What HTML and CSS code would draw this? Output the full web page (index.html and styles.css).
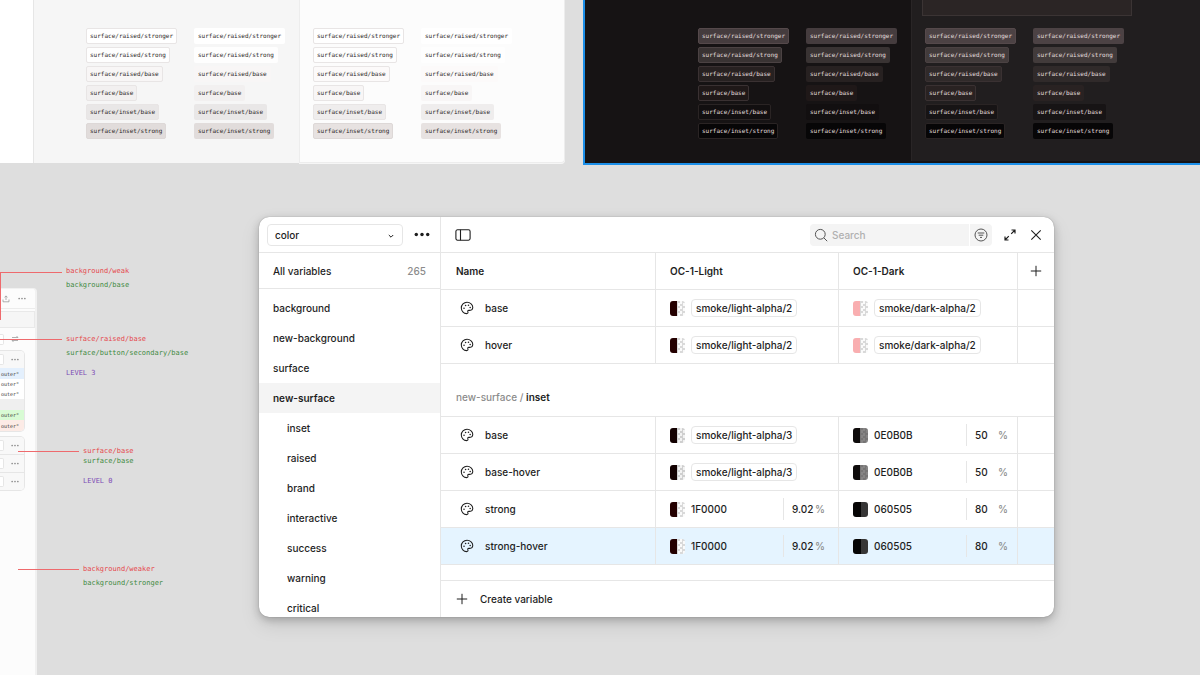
FILE: index.html
```html
<!DOCTYPE html>
<html lang="en">
<head>
<meta charset="utf-8">
<title>Variables</title>
<link rel="stylesheet" href="styles.css">
</head>
<body>
<svg class="defs" aria-hidden="true">
  <symbol id="palette" viewBox="0 0 16 16"><path d="M7.6 14.4C4 14.4 1.5 11.4 1.5 8A6.5 6.5 0 0 1 8 1.5c3.700 0 6.600 2.600 6.600 5.700 0 2.300-1.600 3.500-3.500 3.500h-1c-1.200 0-1.500.8-1.100 1.700.4 1 0 2-1.400 2z" fill="none" stroke="currentColor" stroke-width="1.200"/><circle cx="4.600" cy="8.300" r=".9"/><circle cx="6.400" cy="5.200" r=".9"/><circle cx="9.700" cy="4.800" r=".9"/><circle cx="11.600" cy="7.400" r=".9"/></symbol>
  <symbol id="dots" viewBox="0 0 14 4"><circle cx="2" cy="2" r="1.500"/><circle cx="7" cy="2" r="1.500"/><circle cx="12" cy="2" r="1.500"/></symbol>
  <symbol id="plus" viewBox="0 0 12 12"><path d="M6 .8v10.400M.8 6h10.400" stroke="currentColor" fill="none"/></symbol>
</svg>
<div class="canvas">

  <section class="board board-light">
    <div class="pane pane-a">
      <div class="chips outlined">
        <span class="chip stronger">surface/raised/stronger</span><span class="chip strong">surface/raised/strong</span><span class="chip raised">surface/raised/base</span><span class="chip base">surface/base</span><span class="chip inset">surface/inset/base</span><span class="chip inset-strong">surface/inset/strong</span>
      </div>
      <div class="chips">
        <span class="chip stronger">surface/raised/stronger</span><span class="chip strong">surface/raised/strong</span><span class="chip raised">surface/raised/base</span><span class="chip base">surface/base</span><span class="chip inset">surface/inset/base</span><span class="chip inset-strong">surface/inset/strong</span>
      </div>
    </div>
    <div class="pane pane-b">
      <div class="chips outlined">
        <span class="chip stronger">surface/raised/stronger</span><span class="chip strong">surface/raised/strong</span><span class="chip raised">surface/raised/base</span><span class="chip base">surface/base</span><span class="chip inset">surface/inset/base</span><span class="chip inset-strong">surface/inset/strong</span>
      </div>
      <div class="chips">
        <span class="chip stronger">surface/raised/stronger</span><span class="chip strong">surface/raised/strong</span><span class="chip raised">surface/raised/base</span><span class="chip base">surface/base</span><span class="chip inset">surface/inset/base</span><span class="chip inset-strong">surface/inset/strong</span>
      </div>
    </div>
  </section>

  <section class="board board-dark">
    <div class="pane pane-a">
      <div class="chips outlined">
        <span class="chip stronger">surface/raised/stronger</span><span class="chip strong">surface/raised/strong</span><span class="chip raised">surface/raised/base</span><span class="chip base">surface/base</span><span class="chip inset">surface/inset/base</span><span class="chip inset-strong">surface/inset/strong</span>
      </div>
      <div class="chips">
        <span class="chip stronger">surface/raised/stronger</span><span class="chip strong">surface/raised/strong</span><span class="chip raised">surface/raised/base</span><span class="chip base">surface/base</span><span class="chip inset">surface/inset/base</span><span class="chip inset-strong">surface/inset/strong</span>
      </div>
    </div>
    <div class="pane pane-b">
      <div class="dark-card"></div>
      <div class="chips outlined">
        <span class="chip stronger">surface/raised/stronger</span><span class="chip strong">surface/raised/strong</span><span class="chip raised">surface/raised/base</span><span class="chip base">surface/base</span><span class="chip inset">surface/inset/base</span><span class="chip inset-strong">surface/inset/strong</span>
      </div>
      <div class="chips">
        <span class="chip stronger">surface/raised/stronger</span><span class="chip strong">surface/raised/strong</span><span class="chip raised">surface/raised/base</span><span class="chip base">surface/base</span><span class="chip inset">surface/inset/base</span><span class="chip inset-strong">surface/inset/strong</span>
      </div>
    </div>
  </section>

  <section class="mock">
    <div class="mock-bar">
      <svg class="i-share" viewBox="0 0 8 8"><path d="M4 5V1M2.500 2.300L4 .9l1.500 1.400M1 4.500v2.300h6V4.500" fill="none" stroke="currentColor" stroke-width=".7"/></svg>
      <svg class="i-more"><use href="#dots"/></svg>
    </div>
    <div class="mock-tab"></div>
    <div class="mock-tools">
      <span class="stub"></span>
      <svg class="i-share" viewBox="0 0 8 8"><path d="M1 2.500h6L5.500 1M7 5.500H1L2.500 7" fill="none" stroke="currentColor" stroke-width=".7"/></svg>
    </div>
    <div class="mock-card">
      <div class="mock-row"><span class="stub"></span><svg class="i-more"><use href="#dots"/></svg></div>
      <div class="code tall blue">outer"</div>
      <div class="code">outer"</div>
      <div class="code">outer"</div>
      <div class="code tall gray"></div>
      <div class="code green">outer"</div>
      <div class="code tall pink">outer"</div>
    </div>
    <div class="mock-card">
      <div class="mock-row"><span class="stub"></span><svg class="i-more"><use href="#dots"/></svg></div>
      <div class="mock-row"><span class="stub"></span><svg class="i-more"><use href="#dots"/></svg></div>
      <div class="mock-row"><span class="stub"></span><svg class="i-more"><use href="#dots"/></svg></div>
    </div>
  </section>

  <div class="note note-1"><span class="wire"></span><div><p class="old">background/weak</p><p class="new">background/base</p></div></div>
  <span class="drop"></span>
  <div class="note note-2"><span class="wire"></span><div><p class="old">surface/raised/base</p><p class="new">surface/button/secondary/base</p><p class="level">LEVEL 3</p></div></div>
  <div class="note note-3"><span class="wire"></span><div><p class="old">surface/base</p><p class="new">surface/base</p><p class="level">LEVEL 0</p></div></div>
  <div class="note note-4"><span class="wire"></span><div><p class="old">background/weaker</p><p class="new">background/stronger</p></div></div>

  <main class="window">
    <aside class="sidebar">
      <div class="side-head">
        <div class="picker">
          <select aria-label="Collection"><option>color</option></select>
          <svg class="i-chev" viewBox="0 0 8 8"><path d="M1.800 3L4 5.200 6.200 3" fill="none" stroke="currentColor"/></svg>
        </div>
        <button class="icon-btn" aria-label="More options"><svg class="i-dots"><use href="#dots"/></svg></button>
      </div>
      <button class="all"><span>All variables</span><span class="count">265</span></button>
      <nav class="groups">
        <a href="#">background</a>
        <a href="#">new-background</a>
        <a href="#">surface</a>
        <a href="#" class="current">new-surface</a>
        <a href="#" class="sub">inset</a>
        <a href="#" class="sub">raised</a>
        <a href="#" class="sub">brand</a>
        <a href="#" class="sub">interactive</a>
        <a href="#" class="sub">success</a>
        <a href="#" class="sub">warning</a>
        <a href="#" class="sub">critical</a>
      </nav>
    </aside>
    <div class="content">
      <div class="toolbar">
        <button class="icon-btn" aria-label="Toggle sidebar"><svg class="i-16" viewBox="0 0 16 16"><rect x=".9" y="2.800" width="14.200" height="10.400" rx="1.600" fill="none" stroke="currentColor" stroke-width="1.100"/><path d="M5.500 2.800v10.400" stroke="currentColor" stroke-width="1.100"/></svg></button>
        <div class="search">
          <svg class="i-14" viewBox="0 0 14 14"><circle cx="6.300" cy="6.300" r="4.900" fill="none" stroke="currentColor"/><path d="M9.900 9.900l3.300 3.300" stroke="currentColor"/></svg>
          <input type="text" placeholder="Search" aria-label="Search">
          <button aria-label="Filter"><svg class="i-14" viewBox="0 0 14 14"><circle cx="7" cy="7" r="6" fill="none" stroke="currentColor"/><path d="M3.700 5h6.600M4.700 7.200h4.600M6 9.400h2" stroke="currentColor"/></svg></button>
        </div>
        <button class="icon-btn" aria-label="Expand"><svg class="i-12" viewBox="0 0 12 12"><path d="M7.500 1H11v3.500M11 1L7.200 4.800M4.500 11H1V7.500M1 11l3.800-3.800" fill="none" stroke="currentColor" stroke-width="1.200"/></svg></button>
        <button class="icon-btn" aria-label="Close"><svg class="i-12" viewBox="0 0 12 12"><path d="M1.300 1.300l9.400 9.400M10.700 1.300l-9.400 9.400" stroke="currentColor" stroke-width="1.100"/></svg></button>
      </div>
      <div class="scroll">
      <table class="vars">
        <colgroup><col><col class="c-light"><col class="c-dark"><col class="c-add"></colgroup>
        <thead>
          <tr><th>Name</th><th>OC-1-Light</th><th>OC-1-Dark</th><th class="add"><button class="icon-btn" aria-label="Add mode"><svg class="i-12"><use href="#plus"/></svg></button></th></tr>
        </thead>
        <tbody>
          <tr><td><div class="cell name"><svg class="i-14"><use href="#palette"/></svg>base</div></td><td><div class="cell"><i class="swatch maroon"></i><span class="alias">smoke/light-alpha/2</span></div></td><td><div class="cell"><i class="swatch rose"></i><span class="alias">smoke/dark-alpha/2</span></div></td><td></td></tr>
          <tr><td><div class="cell name"><svg class="i-14"><use href="#palette"/></svg>hover</div></td><td><div class="cell"><i class="swatch maroon"></i><span class="alias">smoke/light-alpha/2</span></div></td><td><div class="cell"><i class="swatch rose"></i><span class="alias">smoke/dark-alpha/2</span></div></td><td></td></tr>
          <tr class="group"><td colspan="4"><span class="path">new-surface /</span> <b>inset</b></td></tr>
          <tr><td><div class="cell name"><svg class="i-14"><use href="#palette"/></svg>base</div></td><td><div class="cell"><i class="swatch wine"></i><span class="alias">smoke/light-alpha/3</span></div></td><td><div class="cell"><i class="swatch half"></i><span class="hex">0E0B0B</span><span class="alpha dark">50<span class="pct">%</span></span></div></td><td></td></tr>
          <tr><td><div class="cell name"><svg class="i-14"><use href="#palette"/></svg>base-hover</div></td><td><div class="cell"><i class="swatch wine"></i><span class="alias">smoke/light-alpha/3</span></div></td><td><div class="cell"><i class="swatch half"></i><span class="hex">0E0B0B</span><span class="alpha dark">50<span class="pct">%</span></span></div></td><td></td></tr>
          <tr><td><div class="cell name"><svg class="i-14"><use href="#palette"/></svg>strong</div></td><td><div class="cell"><i class="swatch maroon"></i><span class="hex">1F0000</span><span class="alpha">9.02<span class="pct">%</span></span></div></td><td><div class="cell"><i class="swatch most"></i><span class="hex">060505</span><span class="alpha dark">80<span class="pct">%</span></span></div></td><td></td></tr>
          <tr class="picked"><td><div class="cell name"><svg class="i-14"><use href="#palette"/></svg>strong-hover</div></td><td><div class="cell"><i class="swatch maroon"></i><span class="hex">1F0000</span><span class="alpha">9.02<span class="pct">%</span></span></div></td><td><div class="cell"><i class="swatch most"></i><span class="hex">060505</span><span class="alpha dark">80<span class="pct">%</span></span></div></td><td></td></tr>
        </tbody>
      </table>
      </div>
      <button class="create"><svg class="i-12"><use href="#plus"/></svg>Create variable</button>
    </div>
  </main>
</div>
</body>
</html>
```
FILE: styles.css
```css
* { box-sizing: border-box; }
body { margin: 0; background: #dedede; }
button, input, select { font: inherit; color: inherit; background: none; border: 0; padding: 0; margin: 0; }
svg { display: block; flex: none; fill: currentColor; }
p { margin: 0; }
.defs { position: absolute; width: 0; height: 0; }
.canvas { position: relative; min-height: 100vh; overflow: hidden; }

/* Token boards */
.board { position: absolute; top: 0; display: flex; font: 6px/14px "DejaVu Sans Mono", monospace; }
.board-light { left: 0; padding-left: 33px; background: #fff; color: #2a2626; border-radius: 0 0 4px 0; }
.board-dark { left: 583px; right: 0; background: #161314; color: #e4dfdf; border: solid #1c8fe8; border-width: 0 0 2px 2px; }
.pane { display: grid; grid-template-columns: 108px 108px; align-content: start; padding: 28px 0 24px; }
.chips { display: flex; flex-direction: column; align-items: flex-start; gap: 3px; }
.chip { padding: 0 3px; border: 1px solid transparent; border-radius: 2px; }
.board-light .pane-a { width: 266px; padding-left: 52px; background: #f6f6f6; border-left: 1px solid #e6e6e6; }
.board-light .pane-b { width: 266px; padding-left: 13px; padding-bottom: 22px; background: #fcfcfc; border: solid #ededed; border-width: 0 1px 1px; border-bottom-right-radius: 4px; box-shadow: 0 1px #f6f6f6; }
.board-light .stronger { background: #fff; }
.board-light .strong { background: #fefefe; }
.board-light .raised { background: #f8f6f6; }
.board-light .pane-b .raised { background: #fcfafa; }
.board-light .base { background: #f2f0f0; }
.board-light .pane-b .base { background: #f8f6f6; }
.board-light .inset { background: #e9e7e7; }
.board-light .pane-b .inset { background: #efeded; }
.board-light .inset-strong { background: #e1dcdb; }
.board-light .pane-b .inset-strong { background: #e7e2e1; }
.board-light .outlined .chip { border-color: #e8e5e5; }
.board-light .outlined .inset-strong { border-color: #ddd8d7; }

.board-dark .pane-a { width: 326px; padding-left: 113px; }
.board-dark .pane-b { flex: 1; padding: 0 0 22px 13px; margin-bottom: 2px; background: #211e1f; border-left: 1px solid #292526; }
.dark-card { grid-column: 1 / 3; width: 210px; height: 16px; margin: 0 0 12px -3px; background: #2b2525; border: solid #3b3434; border-width: 0 1px 1px; }
.board-dark .stronger { background: #453c3e; }
.board-dark .strong { background: #393333; }
.board-dark .raised { background: #272121; }
.board-dark .base { background: #1f1818; }
.board-dark .inset { background: #120f10; }
.board-dark .inset-strong { background: #070607; }
.board-dark .pane-b .stronger { background: #4c4244; }
.board-dark .pane-b .strong { background: #423b3b; }
.board-dark .pane-b .raised { background: #302a2a; }
.board-dark .pane-b .base { background: #292222; }
.board-dark .pane-b .inset { background: #171415; }
.board-dark .pane-b .inset-strong { background: #070607; }
.board-dark .outlined .chip { border-color: #3a3132; }
.board-dark .outlined .stronger { border-color: #55494b; }
.board-dark .outlined .strong { border-color: #4b4243; }
.board-dark .outlined .inset, .board-dark .outlined .inset-strong { border-color: #2a2424; }

/* Cropped app mock at the left edge */
.mock { position: absolute; left: 0; top: 288px; bottom: 0; width: 37px; background: #fcfcfc; border-right: 2px solid #f1f1f1; border-top: 1px solid #f1f1f1; border-top-right-radius: 4px; color: #8f8f8f; font: 5px/10px "DejaVu Sans Mono", monospace; }
.mock-bar { display: flex; align-items: center; justify-content: space-between; height: 20px; padding: 0 9px 0 2px; border-bottom: 1px solid #ececec; }
.mock-tab { height: 17px; margin-top: 2px; background: #f6f6f6; border: solid #e9e9e9; border-width: 1px 1px 1px 0; }
.mock-tools, .mock-row { display: flex; align-items: center; justify-content: space-between; }
.mock-tools { height: 22px; padding-right: 16px; }
.stub { width: 4px; height: 11px; background: #fff; border: 1px solid #e6e6e6; border-left: 0; border-radius: 0 2px 2px 0; }
.mock-card { width: 25px; margin-bottom: 4px; background: #fff; border: 1px solid #e6e6e6; border-left: 0; border-radius: 0 5px 5px 0; overflow: hidden; }
.mock-row { height: 17px; padding-right: 5px; background: #f8f8f8; }
.mock-row + .mock-row { height: 18px; border-top: 1px solid #e6e6e6; }
.code { height: 10px; padding-right: 5px; display: flex; align-items: center; justify-content: flex-end; color: #333; }
.tall { height: 11px; }
.blue { background: #e4f0fd; }
.gray { background: #efefef; }
.green { background: #d8fbd4; }
.pink { background: #fcebe6; }
.i-share { width: 8px; height: 8px; }
.i-more { width: 8px; height: 3px; }

/* Annotations */
.note { position: absolute; left: 0; display: flex; gap: 4px; font: 7px/10px "DejaVu Sans Mono", monospace; }
.note p { white-space: nowrap; }
.wire { flex: none; width: 62px; height: 1px; margin-top: 6px; background: #ee6a6d; }
.note-1 { top: 266px; }
.note-2 { top: 334px; }
.note-2 .wire { margin-top: 5px; }
.note-3 { top: 446px; left: 18px; }
.note-4 { top: 564px; left: 18px; }
.note-3 .wire, .note-4 .wire { width: 61px; margin-top: 5px; }
.note-1 .new, .note-2 .new, .note-4 .new { margin-top: 4px; }
.note .level { margin-top: 10px; }
.old { color: #e5484d; }
.new { color: #3f8a3f; }
.level { color: #7d4bb5; }
.drop { position: absolute; left: 0; top: 272px; width: 1px; height: 48px; background: #ee6a6d; }

/* Variables window */
.window { position: absolute; left: 259px; right: 146px; top: 217px; bottom: 58px; display: flex; overflow: hidden; background: #fff; border-radius: 10px; box-shadow: 0 0 1px rgba(0,0,0,.4), 0 3px 8px rgba(0,0,0,.22), 0 8px 20px rgba(0,0,0,.1); color: #1e1e1e; font: 450 10px/16px Inter, sans-serif; }
.icon-btn { display: grid; place-items: center; width: 24px; height: 24px; flex: none; }
.i-12 { width: 12px; height: 12px; }
.i-14 { width: 14px; height: 14px; }
.i-16 { width: 16px; height: 16px; }
.i-dots { width: 16px; height: 5px; }

.sidebar { flex: none; width: 182px; border-right: 1px solid #e6e6e6; display: flex; flex-direction: column; overflow: hidden; }
.side-head { flex: none; height: 36px; padding: 0 6px 0 8px; display: flex; align-items: center; justify-content: space-between; border-bottom: 1px solid #e6e6e6; }
.picker { position: relative; width: 136px; }
.picker select { width: 100%; height: 22px; padding: 0 7px; appearance: none; border: 1px solid #e6e6e6; border-radius: 4px; }
.i-chev { position: absolute; right: 8px; top: 8px; width: 8px; height: 8px; pointer-events: none; }
.all { flex: none; height: 36px; padding: 0 14px; display: flex; align-items: center; justify-content: space-between; border-bottom: 1px solid #e6e6e6; }
.count { color: #8c8c8c; }
.groups { padding-top: 4px; }
.groups a { display: block; padding: 7px 14px; color: inherit; text-decoration: none; }
.groups .sub { padding-left: 28px; }
.groups .current { background: #f4f4f4; font-weight: 600; }

.content { flex: 1; min-width: 0; display: flex; flex-direction: column; }
.toolbar { flex: none; height: 36px; padding: 0 6px 0 10px; display: flex; align-items: center; gap: 2px; border-bottom: 1px solid #e6e6e6; }
.search { margin-left: auto; margin-right: 4px; width: 182px; height: 22px; padding-left: 4px; display: flex; align-items: center; gap: 4px; background: #f4f4f4; border-radius: 4px; color: #555; }
.search input { flex: 1; min-width: 0; outline: 0; }
.search input::placeholder { color: #b0b0b0; opacity: 1; }
.search button { width: 23px; height: 22px; display: grid; place-items: center; border-left: 1px solid #fff; }

.scroll { flex: 1; min-height: 0; overflow: hidden; }
.vars { width: 100%; table-layout: fixed; border-collapse: separate; border-spacing: 0; }
.c-light { width: 183px; }
.c-dark { width: 179px; }
.c-add { width: 37px; }
.vars th, .vars td { height: 37px; padding: 0 0 0 15px; border-bottom: 1px solid #e6e6e6; text-align: left; }
.vars th + th, .vars td + td { border-left: 1px solid #e6e6e6; padding-left: 14px; }
.vars th { font-weight: 600; }
.vars th.add { padding-left: 6px; }
.vars .group td { height: 53px; padding-top: 14px; }
.group b { font-weight: 600; }
.path { color: #8c8c8c; }
.cell { display: flex; align-items: center; }
.name { gap: 11px; padding-left: 4px; }
.swatch { flex: none; width: 15px; height: 15px; border-radius: 3px; margin-right: 6px; }
.maroon { background: linear-gradient(90deg, #240000 50%, transparent 50%), repeating-conic-gradient(#d9d9d9 0 25%, #fafafa 0 50%) 0 0 / 5px 5px; }
.wine { background: linear-gradient(90deg, #120000 50%, transparent 50%), repeating-conic-gradient(#cfcfcf 0 25%, #f2f2f2 0 50%) 0 0 / 5px 5px; }
.rose { background: linear-gradient(90deg, #f9aeb0 50%, transparent 50%), repeating-conic-gradient(#d9d9d9 0 25%, #fafafa 0 50%) 0 0 / 5px 5px; }
.half { background: linear-gradient(90deg, #0e0b0b 50%, rgba(14,11,11,.5) 50%), repeating-conic-gradient(#e0e0e0 0 25%, #fff 0 50%) 0 0 / 5px 5px; }
.most { background: linear-gradient(90deg, #060505 50%, #373636 50%); }
.alias { padding: 0 4px; border: 1px solid #e6e6e6; border-radius: 4px; }
.alpha { margin-left: auto; width: 55px; height: 22px; padding: 0 13px 0 8px; display: flex; align-items: center; justify-content: space-between; border-left: 1px solid #e6e6e6; }
.alpha.dark { width: 51px; padding-right: 9px; }
.pct { color: #8c8c8c; }
.picked td { background: #e5f4ff; }
.create { flex: none; height: 37px; padding: 0 15px; display: flex; align-items: center; gap: 12px; border-top: 1px solid #e6e6e6; text-align: left; }
```
